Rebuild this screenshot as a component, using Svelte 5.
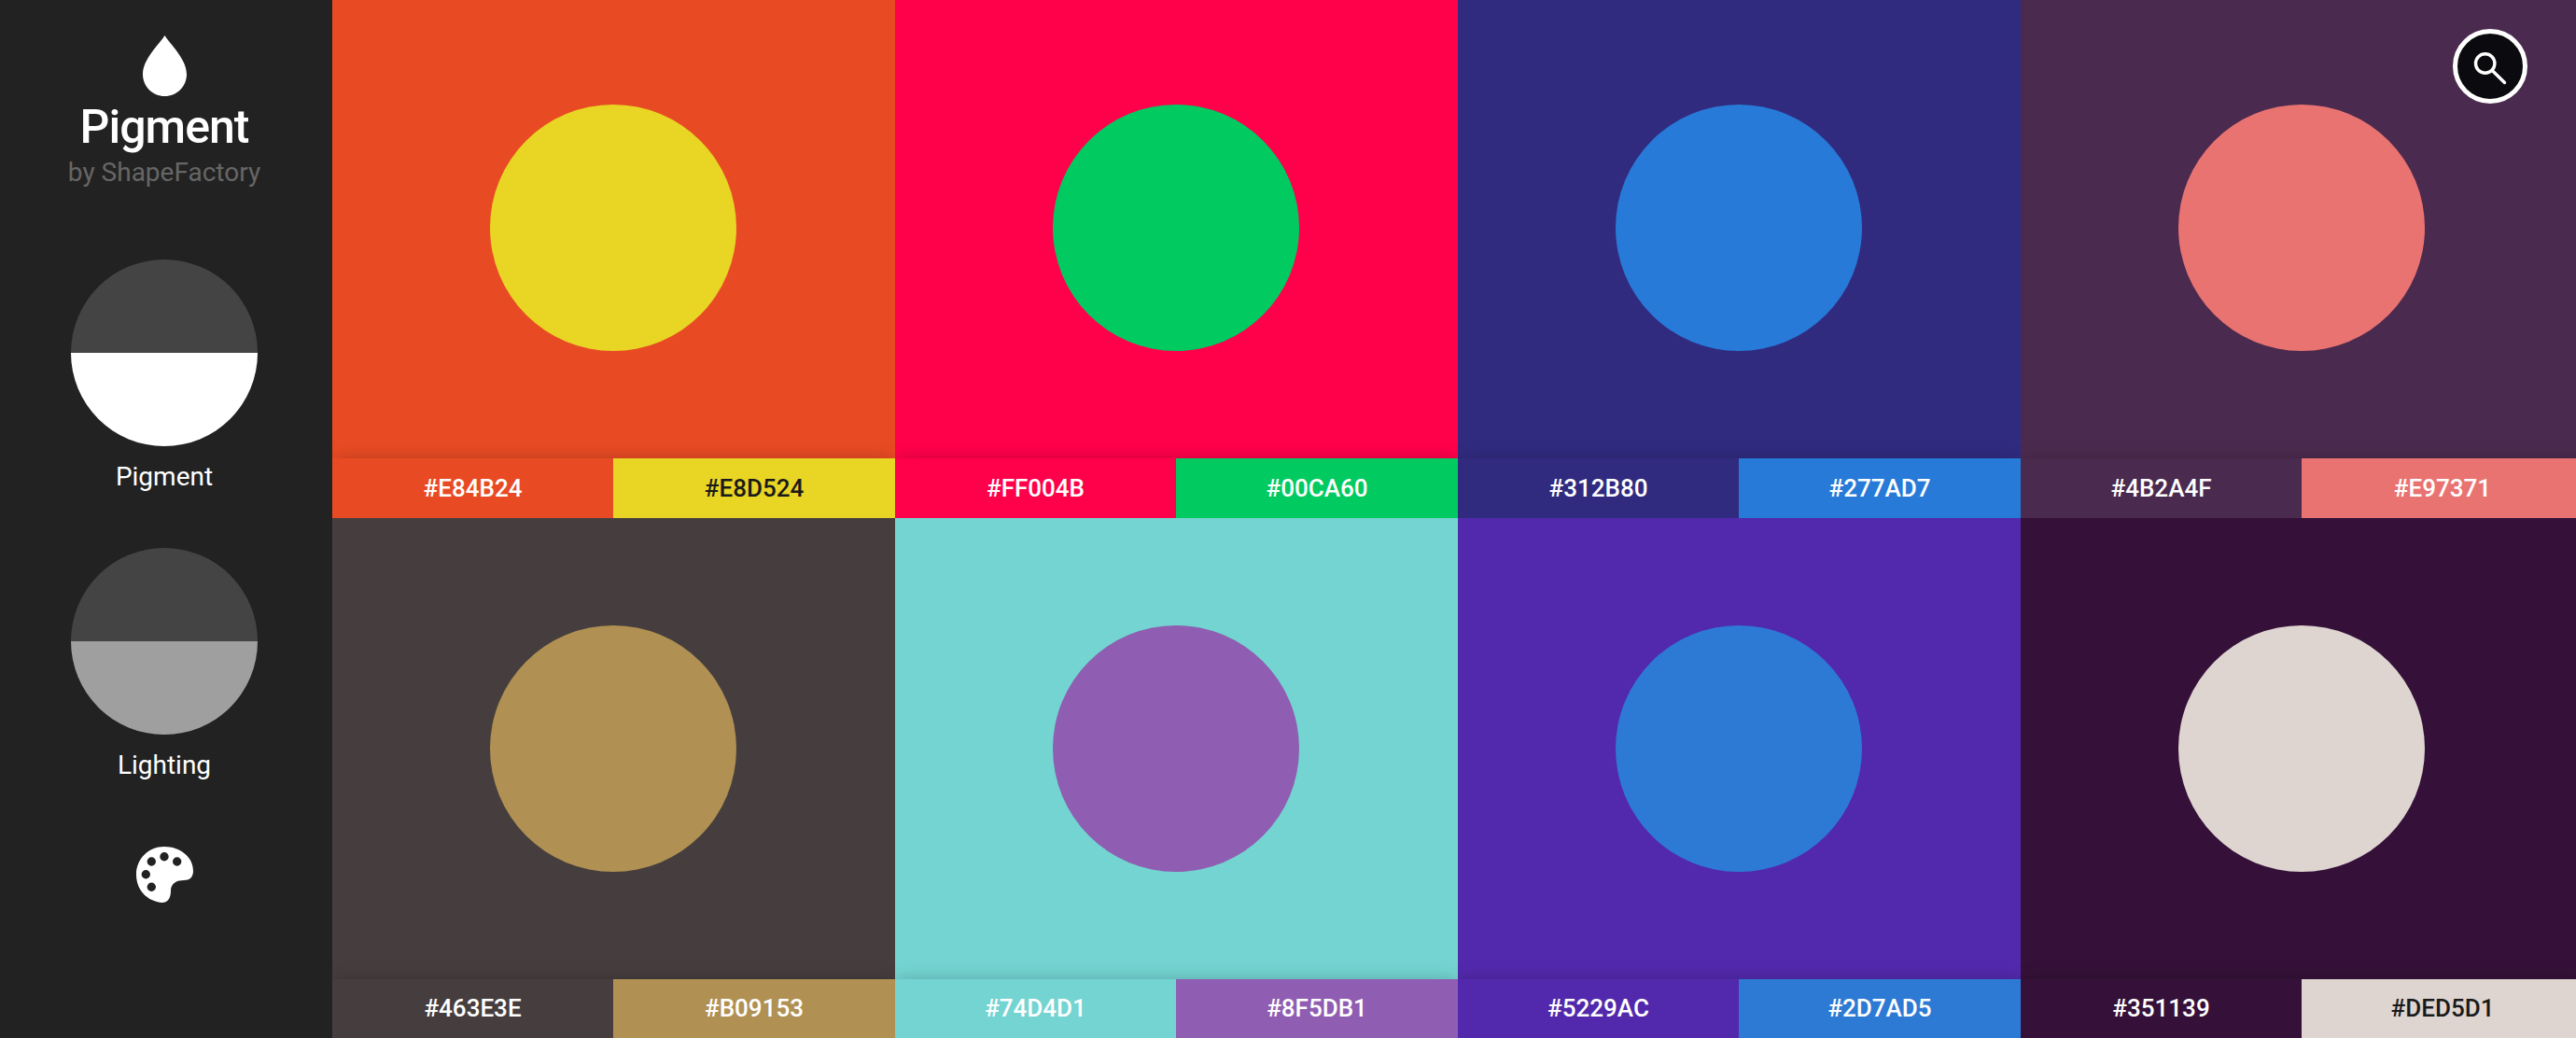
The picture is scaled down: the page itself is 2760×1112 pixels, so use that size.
<script>
  const tiles = [
    { base: "#E84B24", accent: "#E8D524", accentDark: true },
    { base: "#FF004B", accent: "#00CA60" },
    { base: "#312B80", accent: "#277AD7" },
    { base: "#4B2A4F", accent: "#E97371" },
    { base: "#463E3E", accent: "#B09153" },
    { base: "#74D4D1", accent: "#8F5DB1" },
    { base: "#5229AC", accent: "#2D7AD5" },
    { base: "#351139", accent: "#DED5D1", accentDark: true }
  ];
</script>

<div class="page">
  <aside class="sidebar">
    <svg class="drop" viewBox="0 0 47 65" aria-hidden="true">
      <path d="M23.5 0C29 9 47 25 47 41.5C47 54.5 36.5 65 23.5 65C10.5 65 0 54.5 0 41.5C0 25 18 9 23.5 0Z" />
    </svg>
    <h1 class="title">Pigment</h1>
    <p class="by">by ShapeFactory</p>

    <div class="dial">
      <span class="half top"></span>
      <span class="half white"></span>
    </div>
    <p class="dial-label">Pigment</p>

    <div class="dial second">
      <span class="half top"></span>
      <span class="half grey"></span>
    </div>
    <p class="dial-label">Lighting</p>

    <svg class="palette" viewBox="0 0 61 60" aria-hidden="true">
      <path
        fill-rule="evenodd"
        d="M30 0C47 0 61 11 61 26C61 33 57 36 51 36C44 36 37 39 37 47C37 52 36 60 27 60C11 58 0 46 0 30C0 13 13 0 30 0Z
        M30 6A4.7 4.7 0 1 0 30 15.4A4.7 4.7 0 1 0 30 6Z
        M16.3 11.3A4.7 4.7 0 1 0 16.3 20.7A4.7 4.7 0 1 0 16.3 11.3Z
        M43.7 11.3A4.7 4.7 0 1 0 43.7 20.7A4.7 4.7 0 1 0 43.7 11.3Z
        M10.3 25A4.7 4.7 0 1 0 10.3 34.4A4.7 4.7 0 1 0 10.3 25Z
        M16.3 38.6A4.7 4.7 0 1 0 16.3 48A4.7 4.7 0 1 0 16.3 38.6Z"
      />
    </svg>
  </aside>

  <main class="grid">
    {#each tiles as t}
      <section class="tile">
        <div class="stage" style="background:{t.base}">
          <div class="circle" style="background:{t.accent}"></div>
        </div>
        <div class="codes">
          <span class="code" style="background:{t.base}">{t.base}</span>
          <span class="code" class:dark={t.accentDark} style="background:{t.accent}">{t.accent}</span>
        </div>
      </section>
    {/each}
  </main>

  <button class="search" aria-label="Search">
    <svg viewBox="0 0 70 70" width="70" height="70" aria-hidden="true">
      <circle cx="29.7" cy="32" r="10.2" />
      <line x1="37.2" y1="39.5" x2="50.5" y2="52.5" />
    </svg>
  </button>
</div>

<style>
:global(body){
  margin:0;
  background:#222;
}

.page{
  position:relative;
  display:flex;
  width:2760px;
  height:1112px;
  overflow:hidden;
  font-family:Roboto, "Liberation Sans", sans-serif;
}

.sidebar{
  flex:0 0 356px;
  box-sizing:border-box;
  padding:38px 4px 0 0;
  background:#222;
  display:flex;
  flex-direction:column;
  align-items:center;
  color:#fff;
}

.drop{
  width:47px;
  height:65px;
  fill:#fff;
  display:block;
}

.title{
  margin:2px 0 0;
  font-size:50px;
  line-height:62px;
  font-weight:500;
  letter-spacing:-1px;
}

.by{
  margin:0;
  font-size:28px;
  line-height:36px;
  color:#666;
}

.dial{
  width:200px;
  height:200px;
  margin-top:75px;
  border-radius:50%;
  overflow:hidden;
  flex:none;
}

.dial.second{
  margin-top:58px;
}

.half{
  display:block;
  height:100px;
}

.half.top{ background:#444; }
.half.white{ background:#fff; }
.half.grey{ background:#9f9f9f; }

.dial-label{
  margin:15px 0 0;
  font-size:28px;
  line-height:36px;
}

.palette{
  width:61px;
  height:60px;
  margin-top:69px;
  fill:#fff;
  flex:none;
}

.grid{
  flex:none;
  display:grid;
  grid-template-columns:repeat(4, 603px);
  grid-template-rows:repeat(2, 557.25px);
  margin-top:-2.5px;
}

.tile{
  display:flex;
  flex-direction:column;
  overflow:hidden;
}

.stage{
  flex:1;
  display:flex;
  align-items:center;
  justify-content:center;
  padding-right:2px;
}

.circle{
  width:264px;
  height:264px;
  border-radius:50%;
}

.codes{
  position:relative;
  flex:0 0 63.4px;
  display:grid;
  grid-template-columns:301px 1fr;
  box-shadow:0 0 18px -2px rgba(0,0,0,.25);
}

.code{
  display:flex;
  align-items:center;
  justify-content:center;
  font-size:26px;
  font-weight:500;
  color:#fff;
}

.code.dark{
  color:#1a1a1a;
}

.search{
  position:absolute;
  top:31px;
  left:2628px;
  width:80px;
  height:80px;
  padding:0;
  box-sizing:border-box;
  border:5px solid #fff;
  border-radius:50%;
  background:#0a0a0f;
  display:flex;
  align-items:center;
  justify-content:center;
}

.search svg{
  fill:none;
  stroke:#fff;
  stroke-width:3.4;
  stroke-linecap:round;
}
</style>
